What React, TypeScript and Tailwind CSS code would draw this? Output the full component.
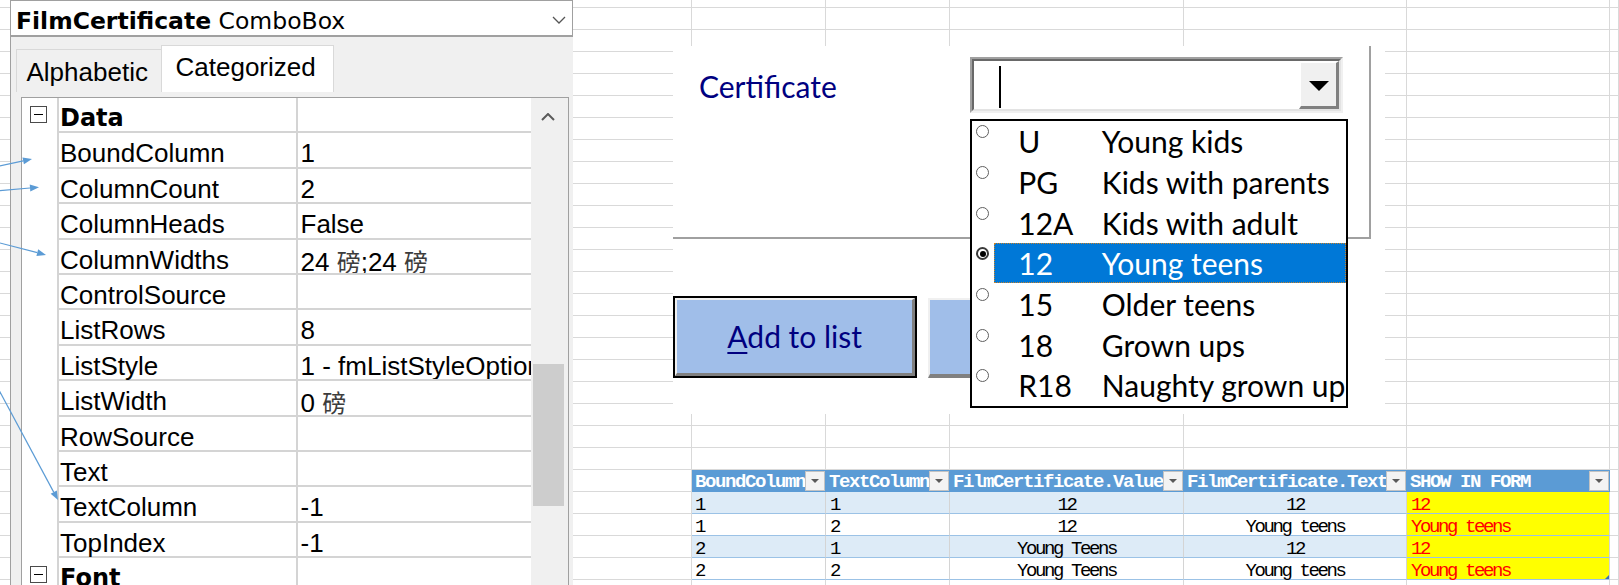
import React from 'react'

// spreadsheet column widths (px), written out so tailwind picks them up
const sheetCols = ['w-[692px]', 'w-[134px]', 'w-[124px]', 'w-[234px]', 'w-[223px]', 'w-[203px]', 'w-[9px]']

const headers = ['BoundColumn', 'TextColumn', 'FilmCertificate.Value', 'FilmCertificate.Text', 'SHOW IN FORM']
const tableRows = [
  ['1', '1', '12', '12', '12'],
  ['1', '2', '12', 'Young teens', 'Young teens'],
  ['2', '1', 'Young Teens', '12', '12'],
  ['2', '2', 'Young Teens', 'Young teens', 'Young teens'],
]
const cellAlign = ['text-left pl-[3px]', 'text-left pl-[4px]', 'text-center', 'text-center', 'text-left pl-[4px]']

const Pang = () => (
  <span className="font-['Noto_Sans_CJK_SC',sans-serif] text-[24px] text-[#3c3c3c]">磅</span>
)

const props: [string, React.ReactNode][] = [
  ['BoundColumn', '1'],
  ['ColumnCount', '2'],
  ['ColumnHeads', 'False'],
  ['ColumnWidths', <>24 <Pang />;24 <Pang /></>],
  ['ControlSource', ''],
  ['ListRows', '8'],
  ['ListStyle', '1 - fmListStyleOption'],
  ['ListWidth', <>0 <Pang /></>],
  ['RowSource', ''],
  ['Text', ''],
  ['TextColumn', '-1'],
  ['TopIndex', '-1'],
]

const listItems = [
  ['U', 'Young kids'],
  ['PG', 'Kids with parents'],
  ['12A', 'Kids with adult'],
  ['12', 'Young teens'],
  ['15', 'Older teens'],
  ['18', 'Grown ups'],
  ['R18', 'Naughty grown ups'],
]

const EmptyRow = ({ h }: { h: string }) => (
  <div className={`flex shrink-0 ${h}`}>
    {sheetCols.map((w, i) => (
      <div key={i} className={`${w} shrink-0 border-r border-b border-[#d9d9d9]`} />
    ))}
  </div>
)

const FilterBtn = () => (
  <div className="w-[20px] h-[20px] mt-px mr-px shrink-0 bg-[#f3f3f3] border border-[#c3c3c3] flex items-center justify-center">
    <div className="w-0 h-0 border-l-[4px] border-r-[4px] border-t-[4px] border-l-transparent border-r-transparent border-t-[#595959]" />
  </div>
)

const HeaderRow = () => (
  <div className="flex shrink-0 h-[22px]">
    <div className={`${sheetCols[0]} shrink-0 border-r border-b border-[#d9d9d9]`} />
    {headers.map((h, i) => (
      <div key={h} className={`${sheetCols[i + 1]} shrink-0 h-[22px] bg-[#5b9bd5] border-b border-[#5b9bd5] flex`}>
        <div className="flex-1 min-w-0 overflow-hidden whitespace-nowrap pl-[3px] pt-[2px] leading-[21px] font-bold text-white tracking-[-1.4px]">
          {h}
        </div>
        <FilterBtn />
      </div>
    ))}
    <div className={`${sheetCols[6]} shrink-0 border-r border-b border-[#d9d9d9]`} />
  </div>
)

const DataRow = ({ cells, band, last }: { cells: string[]; band: boolean; last: boolean }) => (
  <div className="flex shrink-0 h-[22px]">
    <div className={`${sheetCols[0]} shrink-0 border-r border-b border-[#d9d9d9]`} />
    {cells.map((c, j) => {
      const bg = j === 4 ? 'bg-[#ffff00] text-[#ff0000]' : band ? 'bg-[#ddebf7] text-black' : 'bg-white text-black'
      return (
        <div
          key={j}
          className={`${sheetCols[j + 1]} relative shrink-0 h-[22px] border-b border-r border-b-[#9bc2e6] border-r-[#d4d4d4] ${bg} ${cellAlign[j]} pt-[3px] leading-[21px] whitespace-nowrap tracking-[-2.4px]`}
        >
          {c}
          {last && j === 4 && (
            <div className="absolute right-0 bottom-0 w-0 h-0 border-l-[4px] border-b-[4px] border-l-transparent border-b-[#3d6fb5]" />
          )}
        </div>
      )
    })}
    <div className={`${sheetCols[6]} shrink-0 border-r border-b border-[#d9d9d9]`} />
  </div>
)

const Sheet = () => (
  <div className="flex flex-col font-['Liberation_Mono',monospace] text-[19px]">
    <EmptyRow h="h-[8px]" />
    {Array.from({ length: 21 }).map((_, i) => (
      <EmptyRow key={i} h="h-[22px]" />
    ))}
    <HeaderRow />
    {tableRows.map((r, i) => (
      <DataRow key={i} cells={r} band={i % 2 === 0} last={i === 3} />
    ))}
    <EmptyRow h="h-[22px]" />
  </div>
)

const ExpandBox = () => (
  <div className="w-[17px] h-[17px] border border-[#4a4a4a] bg-white flex items-center justify-center">
    <div className="w-[9px] h-px bg-black" />
  </div>
)

const CategoryRow = ({ name }: { name: string }) => (
  <div className="flex h-[35.4px] shrink-0">
    <div className="w-[35px] shrink-0 pl-[7.5px] pt-[8px]">
      <ExpandBox />
    </div>
    <div className="flex-1 flex border-b-2 border-[#d4d4d4]">
      <div className="w-[241px] shrink-0 border-l-2 border-r-2 border-[#d4d4d4] pl-px pt-[7px] leading-[27px] font-['DejaVu_Sans',sans-serif] font-bold text-[24px]">
        {name}
      </div>
      <div className="flex-1" />
    </div>
  </div>
)

const PropRow = ({ name, value }: { name: string; value: React.ReactNode }) => (
  <div className="flex h-[35.4px] shrink-0">
    <div className="w-[35px] shrink-0" />
    <div className="flex-1 min-w-0 flex border-b-2 border-[#d4d4d4]">
      <div className="w-[241px] shrink-0 border-l-2 border-r-2 border-[#d4d4d4] pl-px pt-[7px] leading-[27px] whitespace-nowrap">
        {name}
      </div>
      <div className="flex-1 min-w-0 pl-[2.5px] pt-[7px] leading-[27px] overflow-hidden whitespace-nowrap">{value}</div>
    </div>
  </div>
)

const PropertiesPanel = () => (
  <div className="absolute left-[10px] top-0 w-[563px] h-[585px] bg-[#f0f0f0] border-l border-[#a0a0a0] flex flex-col font-['Liberation_Sans',sans-serif] text-[26px] text-black overflow-hidden">
    <div className="relative h-[37px] shrink-0 bg-white border-t border-r border-b-2 border-[#a0a0a0] pl-[5px] pt-[8px] font-['DejaVu_Sans',sans-serif] text-[23.5px] leading-[25px] whitespace-nowrap">
      <span className="font-bold">FilmCertificate</span> ComboBox
      <svg className="absolute right-[6px] top-[15px]" width="14" height="8" viewBox="0 0 14 8">
        <polyline points="1,1 7,7 13,1" fill="none" stroke="#555" strokeWidth="1.3" />
      </svg>
    </div>
    <div className="h-[55px] shrink-0 flex items-end pl-[4.5px]">
      <div className="w-[146px] h-[43px] border border-b-0 border-[#d9d9d9] bg-[#f0f0f0] pl-[10px] pt-[8px] leading-[29px]">
        Alphabetic
      </div>
      <div className="w-[173px] h-[47px] -ml-px border border-b-0 border-[#d9d9d9] bg-white pl-[14px] pt-[7px] leading-[29px]">
        Categorized
      </div>
    </div>
    <div className="mt-[5px] ml-[10px] w-[548px] flex-1 flex bg-white border border-b-0 border-[#a0a0a0]">
      <div className="flex-1 min-w-0 flex flex-col">
        <CategoryRow name="Data" />
        {props.map(([n, v]) => (
          <PropRow key={n} name={n} value={v} />
        ))}
        <CategoryRow name="Font" />
      </div>
      <div className="w-[37px] shrink-0 bg-[#f0f0f0] flex flex-col">
        <svg className="ml-[10px] mt-[15px]" width="14" height="8" viewBox="0 0 14 8">
          <polyline points="1,7 7,1 13,7" fill="none" stroke="#5a5a5a" strokeWidth="2" />
        </svg>
        <div className="mt-[243px] ml-[1.5px] w-[31.5px] h-[141.6px] bg-[#cdcdcd]" />
      </div>
    </div>
  </div>
)

const ComboBox = () => (
  <div className="mt-[10.7px] w-[373px] h-[56.6px] shrink-0 border-2 border-t-[#a0a0a0] border-l-[#a0a0a0] border-b-[#f0f0f0] border-r-[#f0f0f0]">
    <div className="h-full border-2 border-t-[#696969] border-l-[#696969] border-b-[#e3e3e3] border-r-[#e3e3e3] flex justify-between">
      <div className="ml-[25px] mt-[5.3px] w-[2px] h-[42px] bg-black" />
      <div className="w-[40px] h-full bg-[#f0f0f0] border-t-2 border-l-2 border-t-white border-l-white border-r-[3px] border-b-[3px] border-r-[#808080] border-b-[#808080] flex items-center justify-center">
        <div className="mt-[3px] w-0 h-0 border-l-[10px] border-r-[10px] border-t-[10px] border-l-transparent border-r-transparent border-t-black" />
      </div>
    </div>
  </div>
)

const DropList = () => (
  <div className="absolute left-[297px] top-[73.3px] w-[377.7px] h-[288.6px] border-2 border-black bg-white overflow-hidden z-10">
    {listItems.map(([code, label], i) => {
      const sel = i === 3
      return (
        <div key={code} className="flex h-[40.65px]">
          <div className="w-[22.3px] shrink-0 pl-[4.2px] pt-[4px]">
            <div
              className={`w-[13px] h-[13px] rounded-full bg-white flex items-center justify-center ${sel ? 'border-2 border-[#3a3a3a]' : 'border-[1.5px] border-[#5f5f5f]'}`}
            >
              {sel && <div className="w-[6px] h-[6px] rounded-full bg-black" />}
            </div>
          </div>
          <div
            className={`flex-1 flex h-[39.4px] whitespace-nowrap ${sel ? 'bg-[#0078d7] text-white outline-1 outline-dotted outline-[#c8822a] -outline-offset-1' : 'text-black'}`}
          >
            <div className="w-[107.5px] shrink-0 pl-[24px] pt-[5px]">{code}</div>
            <div className="pt-[5px]">{label}</div>
          </div>
        </div>
      )
    })}
  </div>
)

const UserForm = () => (
  <div className="absolute left-[673px] top-[46px] w-[712px] h-[368px] bg-white font-['Lato',sans-serif] text-[30px] leading-[30px]">
    <div className="w-[698px] h-[193px] border-r-2 border-b-2 border-[#a0a0a0] flex items-start">
      <div className="w-[297px] shrink-0 pl-[26px] mt-[24.5px] text-[#000080]">Certificate</div>
      <ComboBox />
    </div>
    <div className="mt-[56.7px] flex items-start">
      <div className="w-[244.4px] h-[82px] shrink-0 border-2 border-black">
        <div className="h-full border-t-2 border-l-2 border-t-[#f0f0f0] border-l-[#f0f0f0] border-r-[3px] border-b-[3px] border-r-[#808080] border-b-[#808080] bg-[#a0bee9] flex items-center justify-center text-[#000080]">
          <span>
            <span className="underline decoration-2 underline-offset-[4px]">A</span>dd to list
          </span>
        </div>
      </div>
      <div className="ml-[10.6px] mt-[2.3px] w-[240px] h-[79.7px] shrink-0 border-t-2 border-l-2 border-t-[#f0f0f0] border-l-[#f0f0f0] border-r-4 border-b-4 border-r-[#808080] border-b-[#808080] bg-[#a0bee9]" />
    </div>
    <DropList />
  </div>
)

// callout arrows drawn over the property grid
const Arrows = () => (
  <svg className="absolute left-0 top-0 pointer-events-none" width="80" height="585" viewBox="0 0 80 585">
    <g stroke="#5b9bd5" strokeWidth="1.2" fill="none">
      <line x1="-5" y1="167" x2="23.2" y2="160.9" />
      <line x1="-5" y1="191" x2="30" y2="188" />
      <line x1="-5" y1="241.7" x2="37.3" y2="252.7" />
      <line x1="-5" y1="382.7" x2="53.7" y2="492.1" />
    </g>
    <g fill="#5b9bd5">
      <polygon points="32,159 23.94,164.32 22.46,157.48" />
      <polygon points="39,187.3 30.32,191.54 29.74,184.56" />
      <polygon points="46,255 36.41,256.12 38.17,249.35" />
      <polygon points="58,500 50.66,493.73 56.82,490.41" />
    </g>
  </svg>
)

export default function App() {
  return (
    <div className="relative w-[1619px] h-[585px] overflow-hidden bg-white">
      <Sheet />
      <PropertiesPanel />
      <UserForm />
      <Arrows />
    </div>
  )
}
